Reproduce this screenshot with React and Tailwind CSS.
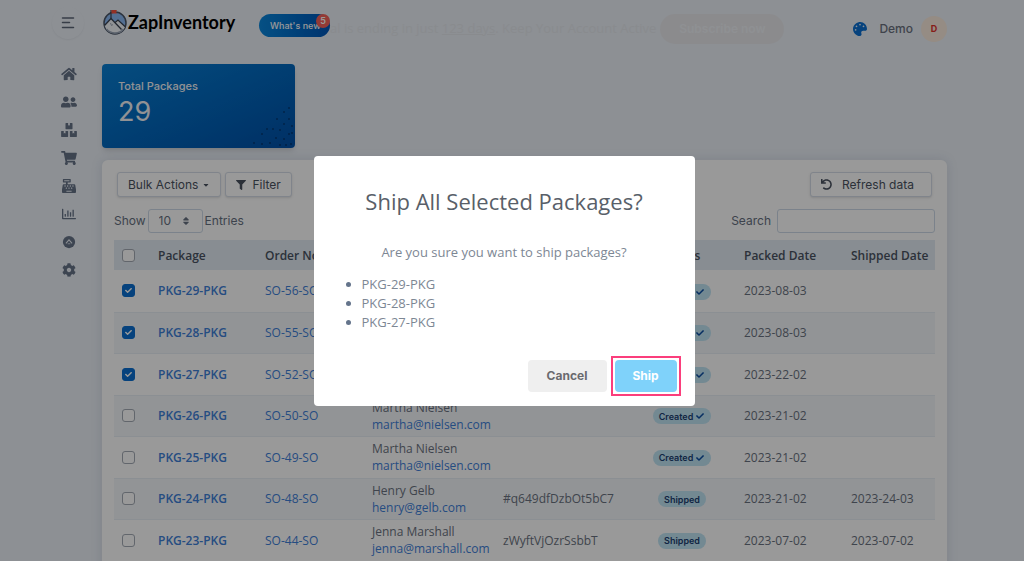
import {
  FaHome,
  FaUserFriends,
  FaBoxes,
  FaShoppingCart,
  FaCashRegister,
  FaRegChartBar,
  FaCog,
  FaFilter,
  FaUndo,
  FaPalette,
  FaCheck,
  FaSort,
  FaCaretDown,
} from 'react-icons/fa';

const packages = [
  { id: 'PKG-29-PKG', order: 'SO-56-SO', name: 'Martha Nielsen', email: 'martha@nielsen.com', tracking: '', status: 'Created', packed: '2023-08-03', shipped: '', checked: true },
  { id: 'PKG-28-PKG', order: 'SO-55-SO', name: 'Martha Nielsen', email: 'martha@nielsen.com', tracking: '', status: 'Created', packed: '2023-08-03', shipped: '', checked: true },
  { id: 'PKG-27-PKG', order: 'SO-52-SO', name: 'Martha Nielsen', email: 'martha@nielsen.com', tracking: '', status: 'Created', packed: '2023-22-02', shipped: '', checked: true },
  { id: 'PKG-26-PKG', order: 'SO-50-SO', name: 'Martha Nielsen', email: 'martha@nielsen.com', tracking: '', status: 'Created', packed: '2023-21-02', shipped: '', checked: false },
  { id: 'PKG-25-PKG', order: 'SO-49-SO', name: 'Martha Nielsen', email: 'martha@nielsen.com', tracking: '', status: 'Created', packed: '2023-21-02', shipped: '', checked: false },
  { id: 'PKG-24-PKG', order: 'SO-48-SO', name: 'Henry Gelb', email: 'henry@gelb.com', tracking: '#q649dfDzbOt5bC7', status: 'Shipped', packed: '2023-21-02', shipped: '2023-24-03', checked: false },
  { id: 'PKG-23-PKG', order: 'SO-44-SO', name: 'Jenna Marshall', email: 'jenna@marshall.com', tracking: 'zWyftVjOzrSsbbT', status: 'Shipped', packed: '2023-07-02', shipped: '2023-07-02', checked: false },
];

const CircleUpIcon = (props) => (
  <svg viewBox="0 0 16 16" width="1em" height="1em" {...props}>
    <circle cx="8" cy="8" r="7" fill="currentColor" />
    <path d="M4.5 9.5 8 5.5l3.5 4" fill="none" stroke="#ebf0f7" strokeWidth="1.2" />
    <path d="M6.5 10h3" fill="none" stroke="#ebf0f7" strokeWidth="0.8" />
  </svg>
);

const menu = [
  { label: 'Home', Icon: FaHome },
  { label: 'Contacts', Icon: FaUserFriends },
  { label: 'Inventory', Icon: FaBoxes },
  { label: 'Sales', Icon: FaShoppingCart },
  { label: 'Purchases', Icon: FaCashRegister },
  { label: 'Reports', Icon: FaRegChartBar },
  { label: 'Integrations', Icon: CircleUpIcon },
  { label: 'Settings', Icon: FaCog },
];

const Logo = () => (
  <svg viewBox="0 0 26 28" className="h-7 w-[26px] shrink-0">
    <circle cx="13" cy="15" r="11" fill="#8bb9f4" stroke="#4a5566" strokeWidth="1.5" />
    <path d="M2.6 17.5 9 10.5l3.5 3.5 3-2 7.8 6.5A11 11 0 0 1 2.6 17.5Z" fill="#f4f7fb" />
    <path d="M2.5 17.5 9 10.5l10.5 11M13 14.5l3-2.5 7.5 7" fill="none" stroke="#3a4352" strokeWidth="1.3" />
    <path d="m8.5 15 1 2.5 1.5-1" fill="none" stroke="#8a95a6" strokeWidth="0.8" />
    <path d="M9 11V2" stroke="#3a4352" strokeWidth="1.2" />
    <path d="M9.5 2H15l-1 1.8 1 1.7H9.5Z" fill="#f5503f" />
    <path d="M4.5 21a11 11 0 0 0 17 0" fill="none" stroke="#9ba6b6" strokeWidth="1.4" />
  </svg>
);

const Dots = () => (
  <svg viewBox="0 0 42 42" className="absolute right-0 bottom-0 h-[42px] w-[42px]" fill="#031a3d">
    {[[36, 2], [31, 6], [24, 13], [36, 13], [31, 18], [39, 20], [14, 23], [20, 23], [27, 24], [36, 28], [9, 28], [23, 32], [31, 33], [39, 27], [1, 37], [9, 38], [17, 37], [27, 39], [33, 39], [38, 38]].map(([x, y]) => (
      <circle key={`${x}-${y}`} cx={x} cy={y} r="0.7" />
    ))}
  </svg>
);

const Checkbox = ({ label, defaultChecked }) => (
  <label className="relative ml-2 block h-[13px] w-[13px]">
    <input
      type="checkbox"
      aria-label={label}
      defaultChecked={defaultChecked}
      className="peer block h-[13px] w-[13px] appearance-none rounded-[3px] border border-[#a3aab5] bg-white checked:border-[#0a6fd0] checked:bg-[#0a6fd0]"
    />
    <FaCheck className="pointer-events-none absolute top-[3px] left-[3px] hidden h-[7px] w-[7px] text-white peer-checked:block" />
  </label>
);

const StatusBadge = ({ status }) => (
  <span className="inline-flex h-4 items-center gap-0.5 rounded-full bg-[#c0e4f4] px-1.5 font-[Inter] text-[9px] font-semibold text-[#1b3f70]">
    {status}
    {status === 'Created' && <FaCheck className="h-2 w-2.5 text-[#0d4fa3]" />}
  </span>
);

const Sidebar = () => (
  <aside className="w-12 shrink-0">
    <button
      type="button"
      aria-label="Toggle menu"
      className="mb-[15px] flex h-[45px] w-7 items-center justify-center"
    >
      <span className="flex h-8 w-8 shrink-0 items-center justify-center rounded-full shadow-xs">
        <svg viewBox="0 0 14 12" className="h-3 w-3.5" stroke="#5c6677" strokeWidth="1.5" strokeLinecap="round">
          <path d="M1.5 1h11M1.5 5.5h7M1.5 10.5h11" />
        </svg>
      </span>
    </button>
    <nav>
      <ul className="w-[30px]">
        {menu.map(({ label, Icon }) => (
          <li key={label}>
            <a href="#" aria-label={label} className="flex h-7 items-center justify-center text-[#667388]">
              <Icon className="h-3.5 w-4" />
            </a>
          </li>
        ))}
      </ul>
    </nav>
  </aside>
);

const Header = () => (
  <header className="flex h-16 items-start">
    <a href="#" className="flex items-center pt-2 text-black">
      <Logo />
      <span className="w-[107px] font-[Lato] text-[18px] leading-7 font-bold">ZapInventory</span>
    </a>
    <button
      type="button"
      className="relative mt-3.5 ml-6 h-[23px] w-[71px] shrink-0 rounded-full bg-linear-to-r from-[#0a86dc] to-[#0056b8] pl-[11px] text-left font-[Inter] text-[9px] font-medium text-white"
    >
      What's new
      <span className="absolute top-0 right-0 flex h-3.5 w-3.5 items-center justify-center rounded-full bg-[#f5625a] text-[9px] font-semibold">
        5
      </span>
    </button>
    <p className="mt-[18px] font-[Open_Sans] text-[13px] leading-5 whitespace-nowrap text-[#e5e8ed]">
      al is ending in just <u>123 days</u>. Keep Your Account Active
    </p>
    <button
      type="button"
      className="mt-3.5 ml-1 h-[30px] w-[124px] shrink-0 rounded-full bg-[#e8e8ec] font-[Inter] text-[12px] font-semibold text-[#eef1f5]"
    >
      Subscribe now
    </button>
    <div className="mt-4 ml-auto flex items-center">
      <FaPalette className="mr-3 h-3.5 w-3.5 text-[#0a6fd0]" />
      <span className="mr-2 font-[Inter] text-[12px] font-medium text-[#6a717d]">Demo</span>
      <span className="flex h-[26px] w-[26px] items-center justify-center rounded-full bg-[#f8e9dc] font-[Inter] text-[9px] font-bold text-[#e0322b]">
        D
      </span>
    </div>
  </header>
);

const toolButton = 'flex h-[25px] items-center rounded-[3px] border border-[#d5dde8] bg-white px-2.5 font-[Inter] text-[12px] text-[#4a5260] shadow-sm';

const PackagesCard = () => (
  <section className="mt-3 rounded-md bg-white px-3 pt-3 pb-6 shadow-[0_0_12px_rgba(60,80,110,0.15)]">
    <div className="flex gap-1 px-[3px]">
      <button type="button" className={toolButton}>
        Bulk Actions
        <FaCaretDown className="ml-1 h-2 w-2" />
      </button>
      <button type="button" className={toolButton}>
        <FaFilter className="mr-1.5 h-2.5 w-2.5" />
        Filter
      </button>
      <button type="button" className={`${toolButton} ml-auto min-w-[122px]`}>
        <FaUndo className="mr-2.5 h-[11px] w-[11px]" />
        Refresh data
      </button>
    </div>

    <div className="mt-3 flex items-center justify-between font-[Inter] text-[12px] text-[#667080]">
      <label className="flex items-center gap-0.5">
        Show
        <span className="relative">
          <select className="h-6 w-[55px] appearance-none rounded-[3px] border border-[#cdd9e8] bg-white pl-2.5">
            <option>10</option>
            <option>25</option>
            <option>50</option>
          </select>
          <FaSort className="pointer-events-none absolute top-[7px] right-3 h-2.5 w-2.5" />
        </span>
        Entries
      </label>
      <label className="flex items-center gap-1.5">
        Search
        <input type="text" className="h-6 w-[158px] rounded-[3px] border border-[#cdd9e8] bg-white px-2" />
      </label>
    </div>

    <table className="mt-[7px] w-full table-fixed border-collapse font-[Open_Sans] text-[12px] leading-[17px] text-[#6a7280]">
      <thead>
        <tr className="h-[30px] bg-[#e3ebf3] text-left whitespace-nowrap text-[#4a5362]">
          <th className="w-[30px]"><Checkbox label="Select all packages" /></th>
          <th className="w-[107px] pl-3.5 font-semibold">Package</th>
          <th className="w-[107px] pl-3.5 font-semibold">Order No</th>
          <th className="w-[131px] pl-3.5 font-semibold">Customer</th>
          <th className="w-[131px] pl-3.5 font-semibold">Tracking No</th>
          <th className="w-[110px] pl-3.5 text-center font-semibold">Status</th>
          <th className="w-[107px] pl-3.5 font-semibold">Packed Date</th>
          <th className="pl-3.5 font-semibold">Shipped Date</th>
        </tr>
      </thead>
      <tbody>
        {packages.map((pkg) => (
          <tr key={pkg.id} className="border-b border-[#e8eef6] odd:h-[42px] even:h-[41px] even:bg-[#f4f7fb]">
            <td><Checkbox label={`Select ${pkg.id}`} defaultChecked={pkg.checked} /></td>
            <td className="pl-3.5">
              <a href="#" className="font-semibold text-[#3f80d8]">{pkg.id}</a>
            </td>
            <td className="pl-3.5">
              <a href="#" className="text-[#3f80d8]">{pkg.order}</a>
            </td>
            <td className="pl-3.5 whitespace-nowrap">
              {pkg.name}
              <a href="#" className="block text-[#3f80d8]">{pkg.email}</a>
            </td>
            <td className="pl-3.5">{pkg.tracking}</td>
            <td className="pl-3.5 text-center"><StatusBadge status={pkg.status} /></td>
            <td className="pl-3.5">{pkg.packed}</td>
            <td className="pl-3.5">{pkg.shipped}</td>
          </tr>
        ))}
      </tbody>
    </table>
  </section>
);

const ShipModal = () => (
  <div className="fixed inset-0 flex items-center justify-center bg-black/40">
    <div
      role="dialog"
      aria-modal="true"
      aria-labelledby="ship-title"
      className="mr-4 w-[381px] rounded-[4px] bg-white px-3.5 pt-[31px] pb-2.5 font-[Open_Sans]"
    >
      <h2 id="ship-title" className="text-center text-[22px] leading-7 font-medium text-[#595f69]">
        Ship All Selected Packages?
      </h2>
      <p className="mt-7 text-center text-[13px] leading-[18px] text-[#7d8794]">
        Are you sure you want to ship packages?
      </p>
      <ul className="mt-3.5 list-disc pl-[34px] text-[13px] leading-[19px] text-[#7d8794] marker:text-[#64748b]">
        {packages.filter((pkg) => pkg.checked).map((pkg) => (
          <li key={pkg.id}>{pkg.id}</li>
        ))}
      </ul>
      <div className="mt-6 flex items-center justify-end gap-1 font-[Inter] text-[12px] font-bold">
        <button type="button" className="h-8 w-[79px] rounded-[4px] bg-[#efefef] text-[#6a6a6e]">
          Cancel
        </button>
        <div className="border-2 border-[#fb3e7c] p-0.5">
          <button type="button" className="block h-8 w-[62px] rounded-[4px] bg-[#7fd2fa] text-white">
            Ship
          </button>
        </div>
      </div>
    </div>
  </div>
);

export default function App() {
  return (
    <div className="h-screen overflow-hidden bg-[#ebf0f7]">
      <div className="flex pr-[77px] pl-[54px]">
        <Sidebar />
        <main className="min-w-0 flex-1">
          <Header />
          <div className="relative h-[84px] w-[193px] overflow-hidden rounded-[4px] bg-linear-to-br from-[#0a80d4] to-[#0050a8] px-4 pt-3.5 font-[Inter] text-[#f2f4f7] shadow-md">
            <p className="text-[11px] leading-4 font-medium">Total Packages</p>
            <p className="text-[27px] leading-9">29</p>
            <Dots />
          </div>
          <PackagesCard />
        </main>
      </div>
      <ShipModal />
    </div>
  );
}
